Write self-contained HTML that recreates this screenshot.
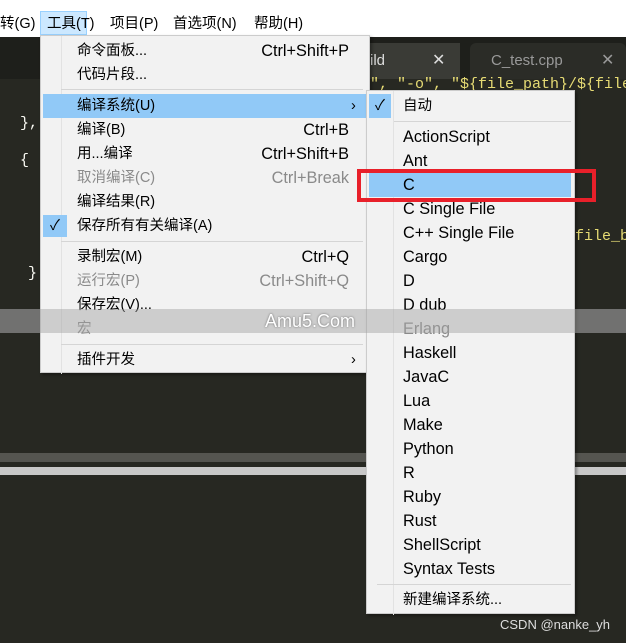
<!DOCTYPE html><html><head><meta charset="utf-8"><style>
*{margin:0;padding:0;box-sizing:border-box}
body{width:626px;height:643px;overflow:hidden;position:relative;background:#272822;font-family:"Liberation Sans","Noto Sans CJK SC",sans-serif;font-size:14.5px;color:#000}
.a{position:absolute;white-space:nowrap}
.mono{font-family:"Liberation Mono",monospace;color:#e6db74;font-size:15px}
.it{position:absolute;left:0;right:0;height:24px;line-height:25px}
.it span{position:absolute}
.it span.r{right:20px}
.l{font-size:16.3px}
.sep{position:absolute;height:1px;background:#d5d5d5}
.dis{color:#8a8a8a}
</style></head><body>
<div class="a" style="left:0;top:0;width:626px;height:37px;background:#fff"></div>
<div class="a" style="left:0;top:12px;font-size:14.5px">转(G)</div>
<div class="a" style="left:40px;top:11px;width:47px;height:24px;background:#cce8ff;border:1px solid #99d1ff"></div>
<div class="a" style="left:47px;top:12px">工具(T)</div>
<div class="a" style="left:110px;top:12px">项目(P)</div>
<div class="a" style="left:173px;top:12px">首选项(N)</div>
<div class="a" style="left:254px;top:12px">帮助(H)</div>
<!-- tab bar -->
<div class="a" style="left:0;top:37px;width:626px;height:42px;background:#1e1f1b"></div>
<div class="a" style="left:300px;top:43px;width:160px;height:36px;background:#3a3b36"></div>
<div class="a" style="left:370px;top:52px;color:#ddd;font-size:15px">ild</div>
<div class="a" style="left:432px;top:50px;color:#ddd;font-size:16px">✕</div>
<div class="a" style="left:470px;top:43px;width:156px;height:36px;background:#2b2c27;border-radius:6px 6px 0 0"></div>
<div class="a" style="left:491px;top:52px;color:#999;font-size:15px">C_test.cpp</div>
<div class="a" style="left:601px;top:50px;color:#999;font-size:16px">✕</div>
<div class="a mono" style="left:20px;top:115px;color:#f8f8f2">},</div>
<div class="a mono" style="left:20px;top:152px;color:#f8f8f2">{</div>
<div class="a mono" style="left:28px;top:265px;color:#f8f8f2">}</div>
<div class="a mono" style="left:370px;top:76px">", "-o", "${file_path}/${file</div>
<div class="a mono" style="left:575px;top:228px">file_b</div>
<!-- bottom bands -->
<div class="a" style="left:0;top:309px;width:626px;height:24px;background:#4c4c49"></div>
<div class="a" style="left:0;top:453px;width:626px;height:9px;background:#555550"></div>
<div class="a" style="left:0;top:467px;width:626px;height:8px;background:#c8c8c8"></div>
<div class="a" style="left:500px;top:617px;color:#ddd;font-size:13px">CSDN @nanke_yh</div>
<!-- main menu -->
<div class="a" style="left:40px;top:35px;width:330px;height:338px;background:#f2f2f2;border:1px solid #ccc;box-shadow:2px 2px 3px rgba(0,0,0,.35)">
<div class="a" style="left:20px;top:0;width:1px;height:338px;background:#e2e2e2"></div>
<div class="it" style="top:3px"><span style="left:36px">命令面板...</span><span class="r l">Ctrl+Shift+P</span></div>
<div class="it" style="top:27px"><span style="left:36px">代码片段...</span></div>
<div class="sep" style="left:20px;right:6px;top:53px"></div>
<div class="it" style="top:58px;left:2px;right:3px;background:#91c9f7"><span style="left:34px">编译系统(U)</span><span style="left:308px">›</span></div>
<div class="it" style="top:82px"><span style="left:36px">编译(B)</span><span class="r l">Ctrl+B</span></div>
<div class="it" style="top:106px"><span style="left:36px">用...编译</span><span class="r l">Ctrl+Shift+B</span></div>
<div class="it dis" style="top:130px"><span style="left:36px">取消编译(C)</span><span class="r l">Ctrl+Break</span></div>
<div class="it" style="top:154px"><span style="left:36px">编译结果(R)</span></div>
<div class="it" style="top:178px"><span style="left:2px;top:1px;width:24px;height:22px;background:#91c9f7;text-align:center;line-height:22px">✓</span><span style="left:36px">保存所有有关编译(A)</span></div>
<div class="sep" style="left:20px;right:6px;top:205px"></div>
<div class="it" style="top:209px"><span style="left:36px">录制宏(M)</span><span class="r l">Ctrl+Q</span></div>
<div class="it dis" style="top:233px"><span style="left:36px">运行宏(P)</span><span class="r l">Ctrl+Shift+Q</span></div>
<div class="it" style="top:257px"><span style="left:36px">保存宏(V)...</span></div>
<div class="it dis" style="top:281px"><span style="left:36px">宏</span></div>
<div class="sep" style="left:20px;right:6px;top:308px"></div>
<div class="it" style="top:312px"><span style="left:36px">插件开发</span><span style="left:310px">›</span></div>
</div>
<!-- submenu -->
<div class="a" style="left:366px;top:90px;width:209px;height:524px;background:#f2f2f2;border:1px solid #ccc;box-shadow:2px 2px 3px rgba(0,0,0,.35)">
<div class="a" style="left:26px;top:0;width:1px;height:524px;background:#e2e2e2"></div>
<div class="it" style="top:3px"><span style="left:2px;top:0;width:22px;height:24px;background:#91c9f7;text-align:center">✓</span><span style="left:36px">自动</span></div>
<div class="sep" style="left:27px;right:3px;top:30px"></div>
<div id="sub"></div>
</div>
<div class="a" style="left:0;top:309px;width:626px;height:24px;background:rgba(160,160,160,.45)"></div>
<div class="a" style="left:265px;top:311px;color:#fff;font-size:18px;text-shadow:0 0 2px #666">Amu5.Com</div>
<div class="a" style="left:357px;top:169px;width:239px;height:33px;border:4px solid #e8202a"></div>
<script>
var n=["ActionScript","Ant","C","C Single File","C++ Single File","Cargo","D","D dub","Erlang","Haskell","JavaC","Lua","Make","Python","R","Ruby","Rust","ShellScript","Syntax Tests"],h="";
n.forEach(function(t,i){var y=34+i*24;h+='<div class="it'+(t=="Erlang"?' dis':'')+'" style="top:'+y+'px;'+(t=="C"?'left:2px;right:3px;background:#91c9f7':'')+'"><span class="l" style="left:'+(t=="C"?34:36)+'px">'+t+'</span></div>'});
h+='<div class="sep" style="left:10px;right:3px;top:493px"></div><div class="it" style="top:497px"><span style="left:36px">新建编译系统...</span></div>';
document.getElementById("sub").outerHTML=h;
</script>
</body></html>
